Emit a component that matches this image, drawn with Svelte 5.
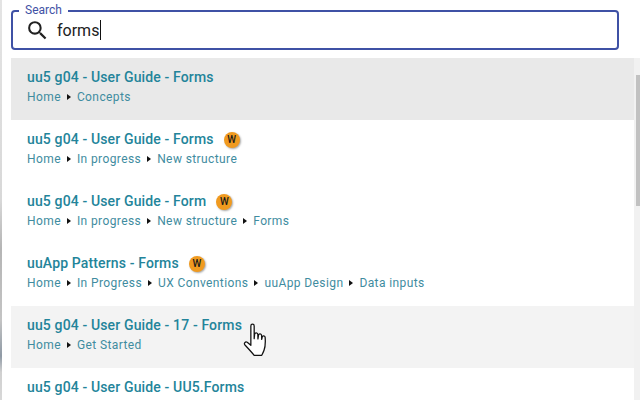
<script>
  const rows = [
    { title: 'uu5 g04 - User Guide - Forms', path: ['Home', 'Concepts'], tone: 'active' },
    { title: 'uu5 g04 - User Guide - Forms', path: ['Home', 'In progress', 'New structure'], badge: true },
    { title: 'uu5 g04 - User Guide - Form', path: ['Home', 'In progress', 'New structure', 'Forms'], badge: true },
    { title: 'uuApp Patterns - Forms', path: ['Home', 'In Progress', 'UX Conventions', 'uuApp Design', 'Data inputs'], badge: true },
    { title: 'uu5 g04 - User Guide - 17 - Forms', path: ['Home', 'Get Started'], tone: 'hover' },
    { title: 'uu5 g04 - User Guide - UU5.Forms', path: ['Home'] }
  ];
</script>

<div class="page">
  <div class="edge"></div>
  <div class="search">
    <span class="legend">Search</span>
    <svg class="glass" viewBox="0 0 24 24" width="25" height="25"><path d="M15.5 14h-.79l-.28-.27A6.47 6.47 0 0 0 16 9.5 6.5 6.5 0 1 0 9.5 16c1.61 0 3.09-.59 4.23-1.57l.27.28v.79l5 4.99L20.49 19l-4.99-5zm-6 0C7.01 14 5 11.99 5 9.5S7.01 5 9.5 5 14 7.01 14 9.5 11.99 14 9.5 14z"/></svg>
    <span class="query">forms</span><span class="caret"></span>
  </div>
  <div class="body">
    <div class="list">
      {#each rows as r}
        <div class="row {r.tone ?? ''}">
          <div class="title">
            <span>{r.title}</span>
            {#if r.badge}<span class="badge">W</span>{/if}
          </div>
          <div class="crumbs">
            {#each r.path as p, i}
              {#if i > 0}<i class="sep"></i>{/if}<span>{p}</span>
            {/each}
          </div>
        </div>
      {/each}
    </div>
    <div class="track"><div class="thumb"></div></div>
  </div>
  <svg class="hand" viewBox="0 0 28 36" width="31" height="40">
    <path d="M8 3.5c0-2.2 3-2.200 3 0V15l.4-4c.3-1.800 2.800-1.600 2.900.2l.1 4 .5-3.400c.3-1.700 2.700-1.500 2.800.3l.1 3.600.5-2.300c.4-1.500 2.500-1.200 2.600.4.3 4 .2 8.500-1 11.700-.7 2-1.600 3.500-2.100 4.500H11c-2-2.500-4.800-5.500-8.300-9.300-1.300-1.500.3-3.500 2-2.500L8 21z" fill="#fff" stroke="#111" stroke-width="1.150" stroke-linejoin="round"/>
  </svg>
</div>

<style>
  :global(body) { margin: 0; background: #fff; }
  .page {
    position: relative;
    width: 640px;
    height: 400px;
    overflow: hidden;
    background: #fff;
    font-family: Roboto, sans-serif;
    box-sizing: border-box;
    padding: 10px 0 0 11px;
  }
  .edge {
    position: absolute;
    left: 0;
    top: 0;
    bottom: 0;
    width: 2px;
    background: linear-gradient(#e4e4e4 0, #d8d8d8 50%, #b5b5b5 62%, #c4c4c4 80%, #8f9aa5 89%, #d0d0d0 93%, #d8d8d8 100%);
  }
  .search {
    position: relative;
    width: 608px;
    height: 40px;
    box-sizing: border-box;
    border: 2px solid #3f51a5;
    border-radius: 4px;
    display: flex;
    align-items: center;
    padding-left: 12px;
  }
  .legend {
    position: absolute;
    left: 6px;
    top: -9px;
    padding: 0 6px;
    background: #fff;
    color: #3f51a5;
    font-size: 12px;
    line-height: 14px;
  }
  .glass { flex: none; fill: #212121; }
  .query { margin-left: 7px; font-size: 16px; color: #212121; }
  .caret { width: 1px; height: 20px; background: #111; margin-left: 1px; }
  .body { display: flex; margin-top: 8px; }
  .list { width: 623px; flex: none; }
  .row { height: 62px; box-sizing: border-box; padding: 9px 16px 0; }
  .active { background: #e9e9e9; }
  .hover { background: #f3f3f3; }
  .title {
    display: flex;
    align-items: center;
    gap: 10px;
    height: 20px;
    font-size: 14px;
    font-weight: 500;
    letter-spacing: .14px;
    color: #23849a;
  }
  .badge {
    width: 16px;
    height: 16px;
    border-radius: 50%;
    background: #f09a1f;
    color: #1a1a1a;
    font-size: 10px;
    font-weight: 500;
    letter-spacing: 0;
    text-align: center;
    line-height: 16px;
    margin-top: 1px;
    box-shadow: 1px 1px 2px rgba(0,0,0,.35);
  }
  .crumbs {
    display: flex;
    align-items: center;
    gap: 6px;
    margin-top: 3px;
    font-size: 12px;
    letter-spacing: .4px;
    color: #3f8ca0;
  }
  .sep {
    width: 0;
    height: 0;
    border-left: 4px solid #111;
    border-top: 3.500px solid transparent;
    border-bottom: 3.500px solid transparent;
  }
  .track { width: 6px; background: #f1f1f1; height: 350px; position: relative; }
  .thumb { position: absolute; left: 2px; right: 0; top: 17px; height: 131px; background: #c1c1c1; }
  .hand { position: absolute; left: 242px; top: 322px; }
</style>
